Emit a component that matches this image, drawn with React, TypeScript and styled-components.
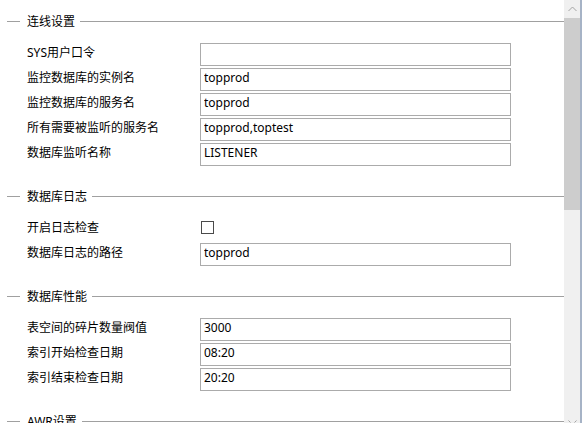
import React from "react";
import styled, { createGlobalStyle } from "styled-components";

const Global = createGlobalStyle`
  html, body { margin: 0; padding: 0; background: #fff; }
  body { font-family: "Noto Sans", "Noto Sans CJK SC", sans-serif; font-size: 12px; color: #000; }
`;

const Frame = styled.div`
  display: flex;
  width: 582px;
  height: 423px;
  overflow: hidden;
  background: #fff;
`;

const Content = styled.div`
  width: 564px;
  height: 423px;
  overflow: hidden;
  display: flex;
  flex-direction: column;
  padding-top: 11px;
  box-sizing: border-box;
`;

const Section = styled.section`
  display: flex;
  flex-direction: column;
  margin-bottom: 20px;
  flex-shrink: 0;
`;

const Header = styled.div`
  display: flex;
  align-items: center;
  height: 21px;
`;

const Line = styled.div<{ $grow?: boolean }>`
  height: 1px;
  background: #a0a0a0;
  ${(p) => (p.$grow ? "flex: 1;" : "width: 13px; margin-left: 7px;")}
`;

const Title = styled.span`
  padding: 0 5px 0 7px;
  line-height: 17px;
  font-size: 12px;
`;

const Rows = styled.div`
  display: flex;
  flex-direction: column;
  gap: 2px;
  margin-top: 11px;
  padding-left: 27px;
`;

const Row = styled.div`
  display: flex;
  align-items: flex-start;
  height: 23px;
`;

const Label = styled.span`
  width: 173px;
  line-height: 17px;
  margin-top: 1px;
  white-space: nowrap;
`;

const Field = styled.input`
  width: 311px;
  height: 23px;
  box-sizing: border-box;
  margin: 0;
  border: 1px solid #ababab;
  border-radius: 0;
  padding: 0 3px 5px 3px;
  font-family: "Noto Sans", "Noto Sans CJK SC", sans-serif;
  font-size: 12px;
  color: #000;
  background: #fff;
  outline: none;
`;

const Check = styled.input`
  appearance: none;
  width: 13px;
  height: 13px;
  margin: 3px 0 0 1px;
  box-sizing: border-box;
  border: 1px solid #4a4a4a;
  background: #fff;
  border-radius: 0;
`;

const Scrollbar = styled.div`
  width: 16px;
  height: 423px;
  background: #f0f0f0;
  display: flex;
  flex-direction: column;
  flex-shrink: 0;
`;

const ArrowButton = styled.div`
  height: 18px;
  display: flex;
  align-items: center;
  justify-content: center;
  flex-shrink: 0;
`;

const Thumb = styled.div`
  height: 192px;
  background: #cdcdcd;
  flex-shrink: 0;
`;

const Track = styled.div`
  flex: 1;
  display: flex;
  flex-direction: column;
  justify-content: flex-end;
  align-items: center;
`;

const Edge = styled.div`
  width: 2px;
  height: 423px;
  background: #a6b3c6;
  flex-shrink: 0;
`;

type RowDef = { label: string; value?: string; check?: boolean };

const sections: { title: string; rows: RowDef[] }[] = [
  {
    title: "连线设置",
    rows: [
      { label: "SYS用户口令", value: "" },
      { label: "监控数据库的实例名", value: "topprod" },
      { label: "监控数据库的服务名", value: "topprod" },
      { label: "所有需要被监听的服务名", value: "topprod,toptest" },
      { label: "数据库监听名称", value: "LISTENER" },
    ],
  },
  {
    title: "数据库日志",
    rows: [
      { label: "开启日志检查", check: true },
      { label: "数据库日志的路径", value: "topprod" },
    ],
  },
  {
    title: "数据库性能",
    rows: [
      { label: "表空间的碎片数量阀值", value: "3000" },
      { label: "索引开始检查日期", value: "08:20" },
      { label: "索引结束检查日期", value: "20:20" },
    ],
  },
  {
    title: "AWR设置",
    rows: [{ label: "AWR快照间隔", value: "60" }],
  },
];

export default function App() {
  return (
    <>
      <Global />
      <Frame>
        <Content>
          {sections.map((s) => (
            <Section key={s.title}>
              <Header>
                <Line />
                <Title>{s.title}</Title>
                <Line $grow />
              </Header>
              <Rows>
                {s.rows.map((r) => (
                  <Row key={r.label}>
                    <Label>{r.label}</Label>
                    {r.check ? (
                      <Check type="checkbox" />
                    ) : (
                      <Field type="text" defaultValue={r.value} />
                    )}
                  </Row>
                ))}
              </Rows>
            </Section>
          ))}
        </Content>
        <Scrollbar>
          <ArrowButton>
            <svg width="9" height="6" viewBox="0 0 9 6">
              <path d="M0.5 5 L4.5 1 L8.5 5" fill="none" stroke="#a3a3a3" strokeWidth="1" />
            </svg>
          </ArrowButton>
          <Thumb />
          <Track>
            <svg width="9" height="3" viewBox="0 0 9 3" style={{ display: "block" }}>
              <path d="M0.5 0.5 L2.5 2.5 M6.5 2.5 L8.5 0.5" fill="none" stroke="#a3a3a3" strokeWidth="1" />
            </svg>
          </Track>
        </Scrollbar>
        <Edge />
      </Frame>
    </>
  );
}
